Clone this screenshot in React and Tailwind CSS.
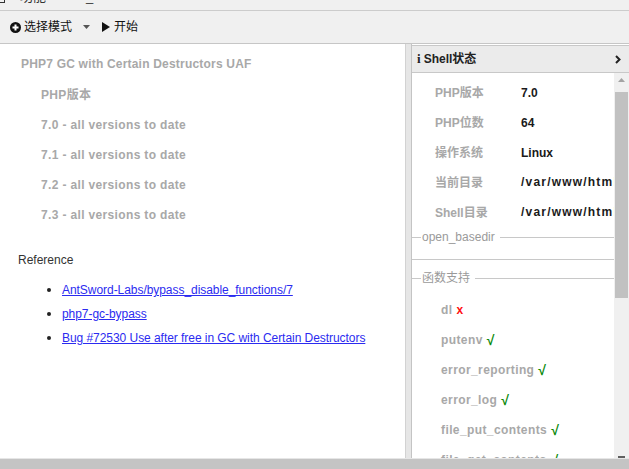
import React from "react";

const leftItems = [
  "PHP版本",
  "7.0 - all versions to date",
  "7.1 - all versions to date",
  "7.2 - all versions to date",
  "7.3 - all versions to date",
];

const links = [
  "AntSword-Labs/bypass_disable_functions/7",
  "php7-gc-bypass",
  "Bug #72530 Use after free in GC with Certain Destructors",
];

const info = [
  ["PHP版本", "7.0"],
  ["PHP位数", "64"],
  ["操作系统", "Linux"],
  ["当前目录", "/var/www/html"],
  ["Shell目录", "/var/www/html"],
];

const funcs = [
  ["dl", false],
  ["putenv", true],
  ["error_reporting", true],
  ["error_log", true],
  ["file_put_contents", true],
  ["file_get_contents", true],
];

function Legend({ children }) {
  return (
    <div className="flex items-center h-[14px]">
      <div className="w-[9px] h-px bg-[#c8c8c8]" />
      <span className="px-[1px] text-[#9a9a9a] leading-[14px]">{children}</span>
      <div className="flex-1 ml-[4px] h-px bg-[#c8c8c8]" />
    </div>
  );
}

export default function App() {
  return (
    <div className="w-[629px] h-[469px] overflow-hidden flex flex-col bg-white text-[12px] font-['Liberation_Sans','Noto_Sans_CJK_SC',sans-serif]">
      {/* tab strip (cut off) */}
      <div className="h-[11px] shrink-0 overflow-hidden bg-[#f0f0f0] border-b border-[#cccccc]">
        <div className="-mt-[10px] h-[13px] flex items-end text-[#333] text-[13px] leading-[13px]">
          <div className="w-[10px] h-[10px] -ml-[5px] border border-[#333]" />
          <span className="ml-[15px]">功能</span>
          <span className="ml-[40px]">_</span>
        </div>
      </div>
      {/* toolbar */}
      <div className="h-[33px] shrink-0 flex items-center pl-[10px] bg-[#f0f0f0] border-b border-[#c6c6c6] text-[#111] text-[12px]">
        <svg width="11" height="11" viewBox="0 0 11 11">
          <circle cx="5.5" cy="5.5" r="5.5" fill="#111" />
          <path d="M5.5 2.5v6M2.5 5.5h6" stroke="#fff" strokeWidth="2" />
        </svg>
        <span className="ml-[3px]">选择模式</span>
        <svg className="ml-[11px]" width="7" height="4" viewBox="0 0 7 4">
          <path d="M0 0h7L3.5 4z" fill="#555" />
        </svg>
        <svg className="ml-[12px]" width="8" height="10" viewBox="0 0 8 10">
          <path d="M0 0l8 5-8 5z" fill="#111" />
        </svg>
        <span className="ml-[4px]">开始</span>
      </div>
      {/* main */}
      <div className="flex-1 flex min-h-0">
        {/* left panel */}
        <div className="w-[406px] shrink-0 border-r border-[#d2d2d2] bg-white">
          <div className="pt-[4px]">
            <div className="pl-[21px] leading-[32px] font-bold text-[#a8a8a8] tracking-[0.2px]">
              PHP7 GC with Certain Destructors UAF
            </div>
            {leftItems.map((t) => (
              <div key={t} className="pl-[41px] leading-[30px] font-bold text-[#a8a8a8] tracking-[0.35px]">
                {t}
              </div>
            ))}
          </div>
          <div className="mt-[21px] pl-[18px] leading-[18px] text-[#333]">Reference</div>
          <ul className="mt-[9px]">
            {links.map((l) => (
              <li key={l} className="flex items-center h-[24px] pl-[47px]">
                <span className="w-[4px] h-[4px] rounded-full bg-[#222] mr-[11px]" />
                <a href="#" className="text-[#2b2bf0] underline tracking-[-0.05px]">
                  {l}
                </a>
              </li>
            ))}
          </ul>
        </div>
        {/* splitter */}
        <div className="w-[5px] shrink-0 bg-[#e6e6e6]" />
        {/* right panel */}
        <div className="flex-1 min-w-0 flex flex-col border-l border-[#c4c4c4] pt-[1px]">
          <div className="h-[28px] shrink-0 flex items-center bg-[#ebebeb] border-t border-b border-[#c8c8c8] pl-[5px] pr-[8px] text-[#222]">
            <span className="font-['Liberation_Serif',serif] font-bold text-[13px]">i</span>
            <span className="ml-[3px] font-bold">Shell状态</span>
            <svg className="ml-auto" width="6" height="9" viewBox="0 0 6 9">
              <path d="M1 1l3.5 3.5L1 8" stroke="#222" strokeWidth="2" fill="none" />
            </svg>
          </div>
          <div className="flex-1 min-h-0 flex">
            <div className="flex-1 min-w-0 overflow-hidden">
              <div className="pt-[5px]">
                {info.map(([k, v]) => (
                  <div key={k} className="flex h-[30px] items-center">
                    <span className="w-[109px] shrink-0 pl-[23px] font-bold text-[#a8a8a8] whitespace-nowrap">{k}</span>
                    <span
                      className={
                        v.startsWith("/")
                          ? "shrink-0 font-bold text-[#1a1a1a] whitespace-nowrap tracking-[1.2px] -mt-[2px]"
                          : "shrink-0 font-bold text-[#1a1a1a] whitespace-nowrap"
                      }
                    >
                      {v}
                    </span>
                  </div>
                ))}
              </div>
              <div className="mt-[2px]">
                <Legend>open_basedir</Legend>
                <div className="h-[16px] border-b border-[#c8c8c8]" />
              </div>
              <div className="mt-[11px]">
                <Legend>函数支持</Legend>
                <div className="pt-[10px]">
                  {funcs.map(([n, ok]) => (
                    <div key={n} className="h-[30px] flex items-center pl-[29px] font-bold whitespace-nowrap">
                      <span className="text-[#a8a8a8] tracking-[0.4px]">{n}</span>
                      {ok ? (
                        <span className="ml-[4px] text-[#0a8a0a] text-[14px]">√</span>
                      ) : (
                        <span className="ml-[4px] text-[#ff1010]">x</span>
                      )}
                    </div>
                  ))}
                </div>
              </div>
            </div>
            {/* scrollbar */}
            <div className="w-[15px] shrink-0 bg-[#f0f0f0] flex flex-col items-center">
              <svg className="mt-[5px]" width="7" height="4" viewBox="0 0 7 4">
                <path d="M3.5 0L7 4H0z" fill="#a3a3a3" />
              </svg>
              <div className="mt-[10px] w-[13px] h-[206px] bg-[#c1c1c1]" />
              <div className="mt-auto w-[7px] h-[2px] bg-[#606060]" />
            </div>
          </div>
        </div>
      </div>
      {/* bottom bar */}
      <div className="h-[11px] shrink-0 bg-[#c4c4c4] border-t border-[#e6e6e6]" />
    </div>
  );
}
